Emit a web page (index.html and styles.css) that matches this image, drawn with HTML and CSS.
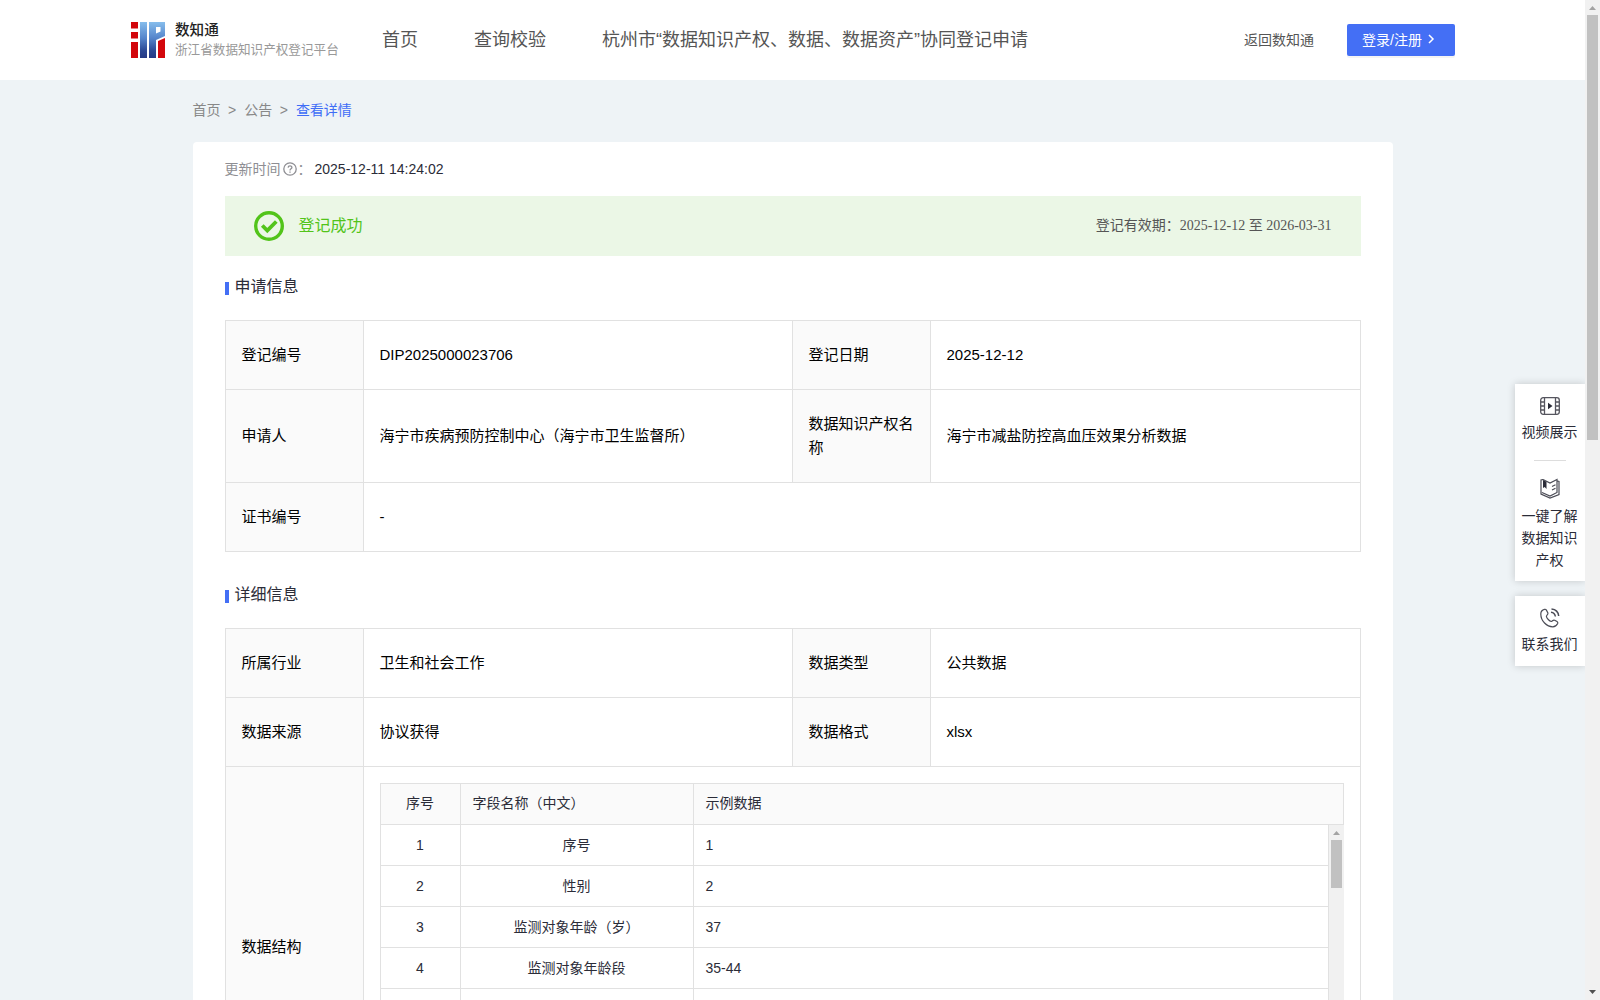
FILE: index.html
```html
<!DOCTYPE html>
<html lang="zh-CN">
<head>
    <meta charset="UTF-8">
    <meta name="viewport" content="width=device-width, initial-scale=1.0">
    <title>浙江省数据知识产权登记平台</title>
    <link rel="stylesheet" href="styles.css">
</head>
<body>

    <div class="page">
        <!-- Header -->
        <header class="header">
            <div class="logo">
                <svg class="logo-icon" width="34" height="36" viewBox="0 0 34 36">
                    <defs>
                        <linearGradient id="blue" x1="0" y1="0" x2="0" y2="36" gradientUnits="userSpaceOnUse">
                            <stop offset="0" stop-color="#86bdec"/>
                            <stop offset="0.45" stop-color="#5585cb"/>
                            <stop offset="0.8" stop-color="#2b4894"/>
                            <stop offset="1" stop-color="#253a85"/>
                        </linearGradient>
                    </defs>
                    <path fill="#d3070c" d="M0 0h7v6.500H0zM0 10h7v6.500H0zM0 20h7v16H0zM27 19l7-3v20h-7z"/>
                    <path fill="url(#blue)" d="M9 0h7v36H9zM18 0h16v14l-9 4V36h-7zM25 5v6.500l4.500-2V5z" fill-rule="evenodd"/>
                </svg>
                <div class="logo-text">
                    <div class="logo-title">数知通</div>
                    <div class="logo-sub">浙江省数据知识产权登记平台</div>
                </div>
            </div>
            <nav class="nav">
                <a>首页</a>
                <a>查询校验</a>
                <a>杭州市“数据知识产权、数据、数据资产”协同登记申请</a>
            </nav>
            <a class="back">返回数知通</a>
            <button class="login">登录/注册
                <svg width="8" height="10" viewBox="0 0 8 10"><path d="M2 1l4 4-4 4" fill="none" stroke="#fff" stroke-width="1.500"/></svg>
            </button>
        </header>

        <!-- Breadcrumb -->
        <div class="breadcrumb">
            <span>首页</span><i>&gt;</i><span>公告</span><i>&gt;</i><span class="current">查看详情</span>
        </div>

        <main class="card">
            <div class="update">
                <span>更新时间</span>
                <svg width="14" height="14" viewBox="0 0 14 14" fill="none" stroke="#8e8e93" stroke-width="1.300">
                    <circle cx="7" cy="7" r="6.200"/>
                    <path d="M5.100 5.600C5.200 3.200 8.900 3.300 8.900 5.400 8.900 6.700 7 6.700 7 8.400M7 9.500v1.200"/>
                </svg>
                <span class="colon">：</span>
                <span class="update-time">2025-12-11 14:24:02</span>
            </div>

            <div class="status">
                <svg width="30" height="30" viewBox="0 0 30 30" fill="none" stroke="#52c41a">
                    <circle cx="15" cy="15" r="13.300" stroke-width="3.400"/>
                    <path d="M8.300 14.500l5 5 9-9" stroke-width="3.800"/>
                </svg>
                <span class="status-text">登记成功</span>
                <span class="status-date">登记有效期：2025-12-12 至 2026-03-31</span>
            </div>

            <h2 class="title">申请信息</h2>
            <table class="info">
                <colgroup><col class="c-label"><col class="c-value"><col class="c-label"><col></colgroup>
                <tr>
                    <th>登记编号</th><td>DIP2025000023706</td>
                    <th>登记日期</th><td>2025-12-12</td>
                </tr>
                <tr class="tall">
                    <th>申请人</th><td>海宁市疾病预防控制中心（海宁市卫生监督所）</td>
                    <th>数据知识产权名称</th><td>海宁市减盐防控高血压效果分析数据</td>
                </tr>
                <tr>
                    <th>证书编号</th><td colspan="3">-</td>
                </tr>
            </table>

            <h2 class="title">详细信息</h2>
            <table class="info">
                <colgroup><col class="c-label"><col class="c-value"><col class="c-label"><col></colgroup>
                <tr>
                    <th>所属行业</th><td>卫生和社会工作</td>
                    <th>数据类型</th><td>公共数据</td>
                </tr>
                <tr>
                    <th>数据来源</th><td>协议获得</td>
                    <th>数据格式</th><td>xlsx</td>
                </tr>
                <tr class="struct">
                    <th>数据结构</th>
                    <td colspan="3">
                        <div class="fields">
                            <div class="row head"><div>序号</div><div>字段名称（中文）</div><div>示例数据</div></div>
                            <div class="fields-body">
                                <div class="rows">
                                    <div class="row"><div>1</div><div>序号</div><div>1</div></div>
                                    <div class="row"><div>2</div><div>性别</div><div>2</div></div>
                                    <div class="row"><div>3</div><div>监测对象年龄（岁）</div><div>37</div></div>
                                    <div class="row"><div>4</div><div>监测对象年龄段</div><div>35-44</div></div>
                                    <div class="row"><div></div><div></div><div></div></div>
                                    <div class="row"><div></div><div></div><div></div></div>
                                    <div class="row"><div></div><div></div><div></div></div>
                                </div>
                                <div class="scrollbar">
                                    <svg width="7" height="4" viewBox="0 0 7 4"><path d="M0 4L3.500 0 7 4z" fill="#a3a3a3"/></svg>
                                    <div class="thumb"></div>
                                </div>
                            </div>
                        </div>
                    </td>
                </tr>
            </table>
        </main>
    </div>

    <!-- Page scrollbar -->
    <div class="scrollbar page-scrollbar">
        <svg width="7" height="4" viewBox="0 0 7 4"><path d="M0 4L3.500 0 7 4z" fill="#a3a3a3"/></svg>
        <div class="thumb"></div>
        <svg class="down" width="7" height="4" viewBox="0 0 7 4"><path d="M0 0L3.500 4 7 0z" fill="#505050"/></svg>
    </div>

    <!-- Floating side menu -->
    <aside class="side">
        <div class="side-box">
            <svg width="20" height="18" viewBox="0 0 20 18" fill="none" stroke="#55555e" stroke-width="1.300">
                <rect x="0.700" y="0.700" width="18.600" height="16.600" rx="2.500"/>
                <path d="M4.500 1v16M15.500 1v16M1 5h3.500M1 9h3.500M1 13h3.500M15.500 5H19M15.500 9H19M15.500 13H19"/>
                <path d="M8 5.800v6.400L12.500 9z" fill="#2b2c38" stroke="none"/>
            </svg>
            <div class="side-text">视频展示</div>
            <div class="side-line"></div>
            <svg width="20" height="21" viewBox="0 0 20 21" fill="none" stroke="#4b4c56" stroke-width="1.200">
                <path d="M3 1.500L1 2v14l9 4 9-3.500V3.500l-1.500-.5M3 1.500L10 5l7-3.500v13L10 18l-8-3.500M12 8.500l3.500-1.800M12 12l3.500-1.800"/>
                <path d="M3 2v8l1.700-1L6.500 11V3.700z" fill="#2b2c38" stroke="none"/>
            </svg>
            <div class="side-text">一键了解数据知识产权</div>
        </div>
        <div class="side-box contact">
            <svg width="20" height="20" viewBox="0 0 20 20" fill="none" stroke="#4b4c56" stroke-width="1.200">
                <path d="M4.500 1.300C2.500 1.800.8 3.700.8 6c0 7 6 12.800 12 12.800 2.500 0 4-1.500 4.900-3.300.3-.8 0-1.500-.7-2l-2.300-1.300c-1.700-.8-2 .8-3.400 1.300-2-.4-4.500-3.200-4.900-5.200.3-1.500 2-1.700 1.500-3.400L6.400 2.100c-.4-.7-1-1-1.900-.8z"/>
                <path d="M11 4.300c2.500.3 4 1.800 4.400 4.200M11.500 1c4 .4 6.800 3 7.200 7" stroke-width="1.500"/>
            </svg>
            <div class="side-text">联系我们</div>
        </div>
    </aside>

</body>
</html>
```
FILE: styles.css
```css
* {
    box-sizing: border-box;
}

body {
    margin: 0;
    height: 1000px;
    display: flex;
    overflow: hidden;
    background: #eef3f6;
    font-family: "Liberation Sans", "Noto Sans CJK SC", sans-serif;
    font-size: 14px;
    line-height: 22px;
    color: #2b2c38;
}

svg {
    display: block;
    flex: none;
}

.page {
    width: 1585px;
    height: 1000px;
    overflow: hidden;
}

/* Header */
.header {
    height: 80px;
    padding: 0 130px 0 131px;
    display: flex;
    align-items: center;
    background: #fff;
}

.logo {
    width: 251px;
    display: flex;
    gap: 10px;
}

.logo-icon {
    margin-top: 2px;
}

.logo-text {
    margin-top: 1px;
}

.logo-title {
    font-size: 14.6px;
    line-height: 19px;
    font-weight: 500;
    color: #222;
}

.logo-sub {
    font-size: 12.6px;
    line-height: 20px;
    color: #999;
    white-space: nowrap;
}

.nav {
    flex: 1;
    display: flex;
    gap: 56px;
    font-size: 18px;
    color: #555;
    white-space: nowrap;
}

.back {
    color: #555;
    margin-right: 33px;
}

.login {
    width: 108px;
    height: 32px;
    padding: 0 0 3px 15px;
    display: flex;
    align-items: center;
    gap: 5px;
    border: 0;
    border-radius: 2px;
    background: #446ff5;
    box-shadow: 0 2px 0 rgba(0, 0, 0, 0.045);
    color: #fff;
    font-family: inherit;
    font-size: 14px;
}

/* Breadcrumb */
.breadcrumb {
    width: 1200px;
    height: 62px;
    margin: 0 auto;
    padding-top: 19px;
    color: #888;
}

.breadcrumb i {
    font-style: normal;
    margin: 0 8px 0 7.5px;
}

.breadcrumb .current {
    color: #3f6df6;
}

/* Main card */
.card {
    width: 1200px;
    height: 1100px;
    margin: 0 auto;
    padding: 16px 32px;
    border-radius: 4px;
    background: #fff;
}

.update {
    display: flex;
    align-items: center;
    color: #8e8e93;
}

.update svg {
    margin-left: 2px;
}

.update .colon {
    width: 17px;
    padding-left: 1px;
}

.update-time {
    margin-left: 1px;
    color: #2b2c38;
}

.status {
    height: 60px;
    margin-top: 16px;
    padding: 0 29px;
    display: flex;
    align-items: center;
    background: #ebf7e6;
}

.status-text {
    flex: 1;
    margin-left: 15px;
    font-size: 16px;
    color: #52c41a;
}

.status-date {
    font-family: "Liberation Serif", "Noto Sans CJK SC", serif;
    color: #555;
}

.title {
    display: flex;
    align-items: center;
    gap: 6px;
    height: 24px;
    margin: 19px 0 21px;
    font-size: 16px;
    font-weight: 400;
    color: #2b2c38;
}

.title::before {
    content: "";
    width: 4px;
    height: 13px;
    margin-top: 2px;
    background: #446ff5;
}

/* Info tables */
.info {
    width: 1136px;
    table-layout: fixed;
    border-collapse: collapse;
    font-size: 15px;
    line-height: 24px;
    color: #000;
}

.info + .title {
    margin-top: 31px;
}

.c-label {
    width: 138px;
}

.c-value {
    width: 429px;
}

.info th,
.info td {
    height: 69px;
    padding: 0 16px 1px;
    border: 1px solid #e1e1e1;
    text-align: left;
    font-weight: 400;
}

.info th {
    background: #fafafa;
}

.info .tall th,
.info .tall td {
    height: 93px;
}

.info .struct th,
.info .struct td {
    height: 361px;
    padding-bottom: 0;
}

/* Field list */
.fields {
    font-size: 14px;
    color: #2b2c38;
    border-left: 1px solid #e1e1e1;
}

.row {
    display: grid;
    grid-template-columns: 80px 233px 1fr;
    height: 41px;
    line-height: 40px;
}

.row div {
    padding: 0 12px;
    border-right: 1px solid #e1e1e1;
    border-bottom: 1px solid #e1e1e1;
    text-align: center;
}

.row div:last-child,
.row.head div:nth-child(2) {
    text-align: left;
}

.row.head {
    height: 42px;
    line-height: 39px;
    border-top: 1px solid #e1e1e1;
    background: #fafafa;
}

.fields-body {
    display: flex;
}

.rows {
    flex: 1;
}

/* Scrollbars */
.scrollbar {
    width: 15px;
    padding-top: 6px;
    display: flex;
    flex-direction: column;
    align-items: center;
    background: #f1f1f1;
}

.scrollbar .thumb {
    width: 11px;
    height: 48px;
    margin-top: 5px;
    background: #c1c1c1;
}

.page-scrollbar {
    height: 1000px;
    padding-bottom: 6px;
}

.page-scrollbar .thumb {
    height: 425px;
}

.page-scrollbar .down {
    margin-top: auto;
}

/* Side menu, padded on the left so the shadow stops at the scrollbar */
.side {
    position: absolute;
    top: 374px;
    left: 1505px;
    width: 80px;
    padding: 10px 0 12px 10px;
    overflow: hidden;
}

.side-box {
    height: 197px;
    padding: 13px 7px 0 6px;
    display: flex;
    flex-direction: column;
    align-items: center;
    background: #fff;
    box-shadow: 0 0 8px rgba(0, 0, 0, 0.18);
    text-align: center;
}

.side-text {
    width: 57px;
    margin-top: 6px;
}

.side-line {
    width: 32px;
    height: 1px;
    margin: 17px 0;
    background: #ddd;
}

.contact {
    height: 70px;
    margin-top: 15px;
    padding-top: 12px;
}

.contact .side-text {
    margin-top: 5px;
}
```
